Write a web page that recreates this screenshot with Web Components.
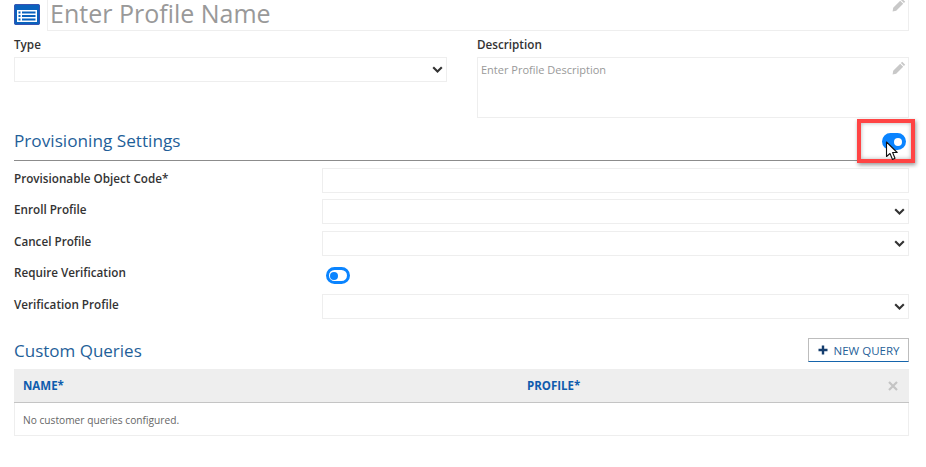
<!DOCTYPE html>
<html>
<head>
<meta charset="utf-8">
<style>
  html, body { margin: 0; padding: 0; background: #fff; }
  body { font-family: "Open Sans", "Noto Sans", sans-serif; overflow: hidden; height: 467px; }
</style>
</head>
<body>
<profile-form></profile-form>

<script>
const CHEVRON = `<svg width="11" height="8" viewBox="0 0 11 8"><path d="M1.2 1.2 5.5 5.5 9.8 1.2" fill="none" stroke="#333" stroke-width="2.1"/></svg>`;
const PENCIL = `<svg width="14" height="14" viewBox="0 0 14 14"><path d="M10.2.8 13.2 3.8 11.9 5.1 8.9 2.1ZM8.2 2.8 11.2 5.8 4.2 12.8.6 13.4 1.2 9.8Z" fill="#c8c8c8"/></svg>`;

class FieldBox extends HTMLElement {
    constructor() {
        super();
        this.shadowDOM = this.attachShadow({mode: "open"});
    }

    connectedCallback() {
        const h = this.getAttribute("h") || 25;
        this.shadowDOM.innerHTML = `
           <style>
               :host {
                   display: block;
                   box-sizing: border-box;
                   height: ${h}px;
                   border: 1px solid #eeeeee;
                   position: relative;
               }
               .chev { position: absolute; right: 3px; top: 8px; line-height: 0; }
           </style>
           <slot></slot>
           ${this.hasAttribute("select") ? `<span class="chev">${CHEVRON}</span>` : ""}`;
    }
}
customElements.define("field-box", FieldBox);

class ToggleSwitch extends HTMLElement {
    constructor() {
        super();
        this.shadowDOM = this.attachShadow({mode: "open"});
    }

    connectedCallback() {
        this.shadowDOM.innerHTML = `
           <style>
               :host {
                   display: block;
                   box-sizing: border-box;
                   width: 24px;
                   height: 17px;
                   border-radius: 9px;
                   border: 3px solid #0a84ff;
                   background: ${this.hasAttribute("on") ? "#0a84ff" : "#fff"};
                   position: relative;
               }
               i {
                   position: absolute;
                   top: 1.5px;
                   width: 8px;
                   height: 8px;
                   border-radius: 50%;
                   ${this.hasAttribute("on") ? "right: 1px; background: #fff;" : "left: 1px; background: #0a84ff;"}
               }
           </style>
           <i></i>`;
    }
}
customElements.define("toggle-switch", ToggleSwitch);

class FormRow extends HTMLElement {
    constructor() {
        super();
        this.shadowDOM = this.attachShadow({mode: "open"});
    }

    connectedCallback() {
        this.shadowDOM.innerHTML = `
           <style>
               :host {
                   display: grid;
                   grid-template-columns: 308px 587px;
                   align-items: start;
               }
               label {
                   font-size: 11.7px;
                   font-weight: 600;
                   color: #333;
                   line-height: 16px;
                   padding-top: 2px;
               }
           </style>
           <label>${this.getAttribute("label")}</label>
           <div><slot></slot></div>`;
    }
}
customElements.define("form-row", FormRow);

class ProfileForm extends HTMLElement {
    constructor() {
        super();
        this.shadowDOM = this.attachShadow({mode: "open"});
    }

    connectedCallback() {
        this.shadowDOM.innerHTML = `
           <style>
               * { box-sizing: border-box; }
               :host {
                   display: block;
                   box-sizing: border-box;
                   width: 926px;
                   height: 467px;
                   padding: 0 17px 0 14px;
                   position: relative;
                   color: #333;
               }
               .title { display: flex; height: 31px; gap: 7px; }
               .title svg.icon { margin-top: 4px; flex: none; }
               .name {
                   flex: 1;
                   height: 31px;
                   border: 1px solid #eeeeee;
                   border-top: 0;
                   position: relative;
                   font-size: 25px;
                   line-height: 26px;
                   color: #999;
                   padding-left: 2px;
               }
               .pen { position: absolute; right: 2px; line-height: 0; }
               .name .pen { top: -2px; }
               .top {
                   display: grid;
                   grid-template-columns: 433px 432px;
                   column-gap: 30px;
                   margin-top: 5px;
               }
               .lbl {
                   font-size: 11.7px;
                   font-weight: 600;
                   line-height: 16px;
                   margin-bottom: 5px;
               }
               .desc {
                   font-size: 11px;
                   line-height: 16px;
                   color: #999;
                   padding: 4px 3px;
               }
               .desc .pen { top: 3px; }
               h2 {
                   margin: 0;
                   font-weight: 400;
                   color: #1f5f99;
                   line-height: 24px;
               }
               .section {
                   margin-top: 11px;
                   height: 32px;
                   border-bottom: 1px solid #8c8c8c;
               }
               .section h2 { font-size: 17.2px; padding-top: 0; }
               .rows { display: flex; flex-direction: column; margin-top: 7px; }
               form-row.r2 { margin-top: 6px; }
               form-row.r3 { margin-top: 7px; }
               form-row.r4 { margin-top: 6px; height: 32px; }
               .tg { padding: 5px 0 0 4px; }
               .cq {
                   display: flex;
                   justify-content: space-between;
                   align-items: flex-end;
                   margin-top: 19px;
                   height: 24px;
               }
               .cq h2 { position: relative; top: 1px; font-size: 17px; }
               .btn {
                   display: flex;
                   align-items: center;
                   justify-content: center;
                   gap: 6px;
                   width: 101px;
                   height: 24px;
                   border: 1px solid #bdbdbd;
                   border-bottom: 1px solid #1565ac;
                   font-size: 11.5px;
                   color: #1f5f99;
               }
               .thead {
                   display: grid;
                   grid-template-columns: 504px 1fr 21px;
                   align-items: center;
                   margin-top: 7px;
                   height: 34px;
                   padding-left: 9px;
                   background: #eeeeee;
                   border-bottom: 1px solid #c4c4c4;
                   font-size: 11.5px;
                   font-weight: 700;
                   color: #0f5cad;
               }
               .tbody {
                   height: 33px;
                   padding: 0 8px;
                   border: 1px solid #eeeeee;
                   border-top: 0;
                   font-size: 10.2px;
                   line-height: 34px;
                   color: #666;
               }
               .mark {
                   position: absolute;
                   left: 857px;
                   top: 119px;
                   width: 58px;
                   height: 44px;
                   border: 4px solid #ff4444;
                   box-shadow: 1px 2px 4px rgba(0,0,0,.4), inset 0 0 4px rgba(0,0,0,.3);
               }
               .toggle-big { position: absolute; left: 882px; top: 133px; }
               .cursor { position: absolute; left: 885px; top: 141px; line-height: 0; }
           </style>

           <div class="title">
               <svg class="icon" width="26" height="21" viewBox="0 0 26 21">
                   <rect width="26" height="21" rx="2" fill="#0a62bd"/>
                   <rect x="0.5" y="0.5" width="25" height="20" rx="2" fill="none" stroke="#3a52b0"/>
                   <rect x="3" y="6" width="20" height="12" fill="#fff"/>
                   <rect x="4.5" y="7.5" width="2" height="2" fill="#0a62bd"/>
                   <rect x="8" y="7.5" width="13.5" height="2" fill="#0a62bd"/>
                   <rect x="4.5" y="11" width="2" height="2" fill="#0a62bd"/>
                   <rect x="8" y="11" width="13.5" height="2" fill="#0a62bd"/>
                   <rect x="4.5" y="14.5" width="2" height="2" fill="#0a62bd"/>
                   <rect x="8" y="14.5" width="13.5" height="2" fill="#0a62bd"/>
               </svg>
               <div class="name">Enter Profile Name<span class="pen">${PENCIL}</span></div>
           </div>

           <div class="top">
               <div>
                   <div class="lbl">Type</div>
                   <field-box select></field-box>
               </div>
               <div>
                   <div class="lbl">Description</div>
                   <field-box h="61"><div class="desc">Enter Profile Description<span class="pen">${PENCIL}</span></div></field-box>
               </div>
           </div>

           <div class="section"><h2 style="margin-top:10px">Provisioning Settings</h2></div>

           <div class="rows">
               <form-row label="Provisionable Object Code*"><field-box></field-box></form-row>
               <form-row class="r2" label="Enroll Profile"><field-box select></field-box></form-row>
               <form-row class="r3" label="Cancel Profile"><field-box select></field-box></form-row>
               <form-row class="r4" label="Require Verification"><div class="tg"><toggle-switch></toggle-switch></div></form-row>
               <form-row label="Verification Profile"><field-box select></field-box></form-row>
           </div>

           <div class="cq">
               <h2>Custom Queries</h2>
               <div class="btn">
                   <svg width="10" height="10" viewBox="0 0 10 10"><path d="M3.8 0.5h2.4v3.3h3.3v2.4H6.2v3.3H3.8V6.2H.5V3.8h3.3z" fill="#153e6e"/></svg>
                   <span>NEW QUERY</span>
               </div>
           </div>

           <div class="thead">
               <span>NAME*</span>
               <span>PROFILE*</span>
               <svg width="10" height="10" viewBox="0 0 10 10"><path d="M1 1 9 9M9 1 1 9" stroke="#c4c4c4" stroke-width="2.2"/></svg>
           </div>
           <div class="tbody">No customer queries configured.</div>

           <div class="mark"></div>
           <toggle-switch class="toggle-big" on></toggle-switch>
           <svg class="cursor" width="14" height="20" viewBox="0 0 14 20">
               <path d="M1.5 1 V15.5 L5 12.5 L7.5 18.5 L10 17.3 L7.6 11.5 H12.2 Z" fill="#fff" stroke="#111" stroke-width="1.1" stroke-linejoin="round"/>
           </svg>`;
    }
}
customElements.define("profile-form", ProfileForm);
</script>
</body>
</html>
